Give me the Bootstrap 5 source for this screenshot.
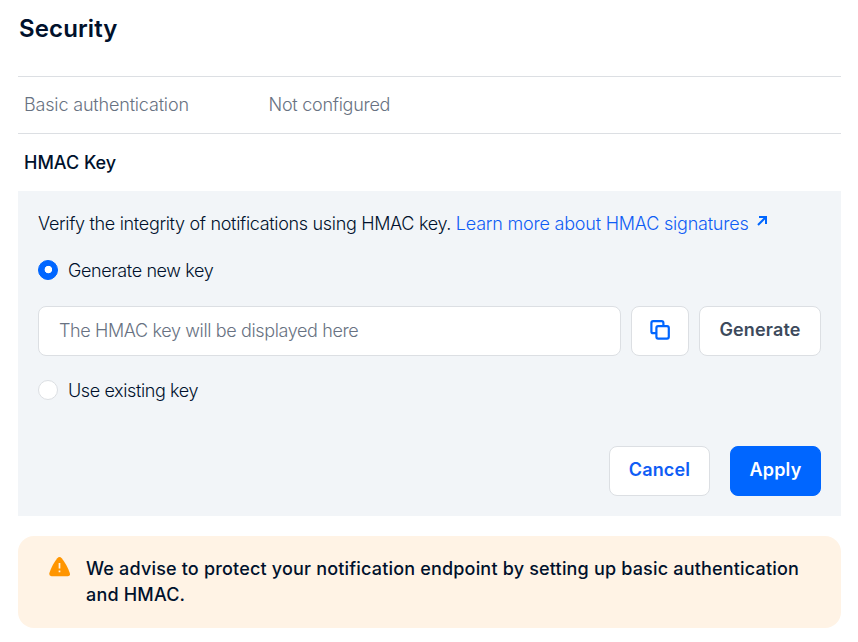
<!DOCTYPE html>
<html lang="en">
<head>
<meta charset="utf-8">
<meta name="viewport" content="width=device-width, initial-scale=1">
<title>Security</title>
<link href="https://cdn.jsdelivr.net/npm/bootstrap@5.3.0/dist/css/bootstrap.min.css" rel="stylesheet">
<style>
  body { font-family: Inter, "Liberation Sans", sans-serif; font-size: 18px; font-weight: 300; line-height: 26px; color: #00112c; background: #fff; }
  .page { padding: 14px 17px 0 18px; }
  .page-title { font-size: 24px; line-height: 30px; font-weight: 600; letter-spacing: .12px; margin-bottom: 32px; padding-left: 1px; }
  .setting { border-top: 1px solid #dcdfe3; border-bottom: 1px solid #dcdfe3; height: 58px; padding: 0 6px; color: #687282; }
  .setting-name { width: 244.5px; letter-spacing: -.17px; }
  .setting-value { letter-spacing: -.27px; }
  .key-title { font-size: 18px; line-height: 26px; font-weight: 500; margin: 16px 0 15px; padding-left: 6px; }
  .panel { background: #f2f5f8; height: 325px; padding: 20px; margin-bottom: 20px; }
  .panel a { color: #0f5df5; letter-spacing: -.21px; }
  .panel-text { letter-spacing: -.32px; margin-bottom: 20px; }
  .external { margin-left: 7px; vertical-align: 3px; }
  .radio-row { gap: 10px; height: 26px; letter-spacing: -.39px; }
  .radio-row span { padding-top: 2px; }
  .form-check-input.dot { width: 20px; height: 20px; margin: 0; border: 1px solid #dcdfe3; box-shadow: none; flex: none; }
  .form-check-input.dot:checked { background: #06f radial-gradient(circle at 52% 47.5%, #fff 3.4px, transparent 4.1px); border-color: #06f; }
  .key-row { gap: 10px; margin: 23px 0 21px; }
  .control { height: 50px; border: 1px solid #dcdfe3; border-radius: 8px; background: #fff; font-size: 18px; }
  .key-input { font-weight: 300; padding: 0 20px 2px; letter-spacing: -.37px; }
  .key-input::placeholder { color: #687282; opacity: 1; }
  .action { font-weight: 600; padding: 0 0 3px; letter-spacing: .15px; }
  .copy { width: 58px; flex: none; padding-bottom: 5px; }
  .generate { width: 122px; flex: none; color: #3d4a5c; }
  .actions { gap: 20px; margin-top: 43px; }
  .cancel { width: 101px; color: #0f5df5; }
  .apply { width: 91px; background: #06f; border-color: #06f; color: #fff; }
  .notice { background: #fff3e5; border-radius: 16px; height: 92px; padding: 20px 30px; font-weight: 500; letter-spacing: .18px; }
  .notice svg { flex: none; margin: 1px 15px 0 1px; }
</style>
</head>
<body>
<main class="page">
  <h1 class="page-title">Security</h1>
  <div class="setting d-flex align-items-center">
    <span class="setting-name">Basic authentication</span>
    <span class="setting-value">Not configured</span>
  </div>
  <h2 class="key-title">HMAC Key</h2>
  <section class="panel d-flex flex-column">
    <p class="text-nowrap panel-text">Verify the integrity of notifications using HMAC key.
      <a href="#" class="text-decoration-none">Learn more about HMAC signatures<svg class="external" width="12" height="12" viewBox="0 0 12 12" fill="none" stroke="#06f" stroke-width="2"><path d="M3 2H10V9M10 2L2 10"/></svg></a></p>
    <label class="d-flex align-items-center radio-row"><input class="form-check-input dot" type="radio" name="key" checked><span>Generate new key</span></label>
    <div class="d-flex key-row">
      <input class="form-control control key-input" type="text" placeholder="The HMAC key will be displayed here">
      <button class="btn control action copy" aria-label="Copy"><svg width="20" height="20" viewBox="0 0 20 20" fill="none" stroke="#06f" stroke-width="2.2"><rect x="1.4" y="1.2" width="12" height="12" rx="1.8"/><rect x="6.4" y="6.2" width="12.4" height="12.4" rx="1.8" fill="#fff"/></svg></button>
      <button class="btn control action generate">Generate</button>
    </div>
    <label class="d-flex align-items-center radio-row"><input class="form-check-input dot" type="radio" name="key"><span>Use existing key</span></label>
    <div class="d-flex justify-content-end actions">
      <button class="btn control action cancel">Cancel</button>
      <button class="btn control action apply">Apply</button>
    </div>
  </section>
  <div class="notice d-flex align-items-start">
    <svg width="22" height="20" viewBox="0 0 22 20"><path d="M8.300 1.300Q10.500-1.100 12.700 1.300Q17.500 7 20.800 16Q21.600 19 18.800 19.200H2.500Q-.3 19 .4 16Q3.500 7 8.300 1.300Z" fill="#ff9500"/><path d="M10.500 6V11.500M10.500 13.500V15.300" stroke="#fff3e5" stroke-width="1.700"/></svg>
    <span>We advise to protect your notification endpoint by setting up basic authentication<br>and HMAC.</span>
  </div>
</main>
<script src="https://cdn.jsdelivr.net/npm/bootstrap@5.3.0/dist/js/bootstrap.bundle.min.js"></script>
</body>
</html>
